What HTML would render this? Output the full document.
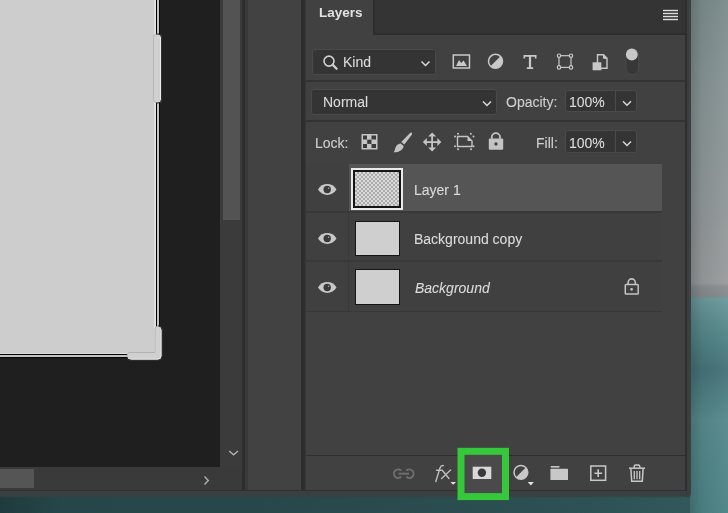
<!DOCTYPE html>
<html><head><meta charset="utf-8">
<style>
*{margin:0;padding:0;box-sizing:border-box}
html,body{width:728px;height:513px;overflow:hidden;background:#2b4749;font-family:"Liberation Sans",sans-serif}
.a{position:absolute}
#bgphoto{left:686px;top:0;width:42px;height:513px;background:linear-gradient(90deg,rgba(20,30,30,.3) 0px,rgba(20,30,30,.22) 6px,rgba(20,30,30,.08) 16px,rgba(255,255,255,.03) 42px),linear-gradient(180deg,#7c8c8d 0px,#879495 80px,#919899 200px,#9a9c9e 283px,#8a8e90 287px,#858a8c 296px,#6c9a9c 299px,#5c8d90 320px,#4f8084 345px,#457379 370px,#578a8d 420px,#4d8487 513px)}
#bottomstrip{left:0;top:491px;width:690px;height:22px;background:linear-gradient(180deg,#3a3f3f 0px,#3a3f3f 5px,rgba(58,63,63,0) 7px),linear-gradient(90deg,#1f3a3c 0px,#25474a 60px,#28494b 300px,#2c5053 560px,#32585b 690px)}
#work{left:0;top:0;width:220px;height:467px;background:#1f1f1f}
#canvas{left:0;top:0;width:160px;height:358px;background:#080808}
#canvasw2{left:0;top:0;width:159px;height:357px;background:#c4c4c4}
#canvasb{left:0;top:0;width:157px;height:355px;background:#000}
#canvasw{left:0;top:0;width:156px;height:354px;background:#e0e0e0}
#canvasf{left:0;top:0;width:154px;height:353px;background:#cdcdcd}
#vscroll{left:220px;top:0;width:22px;height:467px;background:#3b3b3b}
#vthumb{left:222.5px;top:0;width:17.5px;height:220px;background:#535353}
#hscroll{left:0;top:467px;width:243px;height:24px;background:#3a3a3a}
#hthumb{left:0;top:469px;width:34px;height:19px;background:#555555}
#sep1{left:242px;top:0;width:6px;height:491px;background:linear-gradient(90deg,#2d2d2d 0px,#2d2d2d 2.5px,#393939 2.5px)}
#mid{left:248px;top:0;width:53px;height:491px;background:#424242}
#sep2{left:301px;top:0;width:5px;height:491px;background:linear-gradient(90deg,#2e2e2e 0px,#2e2e2e 3.5px,#383838 3.5px)}
#panel{left:306px;top:0;width:380px;height:491px;background:#414141}
#panelEdge{left:686px;top:0;width:5px;height:497px;background:linear-gradient(90deg,#383b3b,#3e4242);border-bottom-right-radius:4px}
#hdr{left:372.5px;top:0;width:313px;height:35px;background:#343434;box-shadow:inset 1.5px -1.5px 1px #2d2d2d}
.box{background:#343434;border:1.5px solid #4a4a4a;border-radius:3px}
.t{position:absolute;color:#dcdcdc;font-size:14px;white-space:nowrap;line-height:1;will-change:transform;-webkit-text-stroke:0.08px #dcdcdc}
.row{position:absolute;left:306px;width:356px;background:#404040}
.eyec{position:absolute;left:306px;width:43px;background:#404040}
.sel{background:#555555}
.thumb{position:absolute;border:2px solid #151515;background:#cfcfcf}
</style></head><body>
<div class="a" id="bgphoto"></div>
<div class="a" id="bottomstrip"></div>
<div class="a" id="work"></div>
<div class="a" id="canvas"></div>
<div class="a" id="canvasw2"></div>
<div class="a" id="canvasb"></div>
<div class="a" id="canvasw"></div>
<div class="a" id="canvasf"></div>
<div class="a" id="vscroll"></div>
<div class="a" id="vthumb"></div>
<div class="a" id="hscroll"></div>
<div class="a" id="hthumb"></div>
<div class="a" id="sep1"></div>
<div class="a" id="mid"></div>
<div class="a" id="sep2"></div>
<div class="a" id="panel"></div>
<div class="a" id="panelEdge"></div>
<div class="a" id="hdr"></div>
<div class="a" style="left:685px;top:0;width:1.5px;height:491px;background:#2e2e2e"></div>
<div class="a" style="left:0;top:490px;width:686px;height:1px;background:#303030"></div>

<!-- header -->
<div class="t" style="left:319px;top:6px;font-size:13.5px;font-weight:bold;color:#e2e2e2;-webkit-text-stroke:0">Layers</div>

<!-- separators -->
<div class="a" style="left:306px;top:80px;width:380px;height:2px;background:#333"></div>
<div class="a" style="left:306px;top:120px;width:380px;height:2px;background:#333"></div>
<div class="a" style="left:306px;top:455px;width:380px;height:1px;background:#2f2f2f"></div>

<!-- filter row -->
<div class="a box" style="left:312px;top:49px;width:124px;height:26px"></div>
<div class="t" style="left:343px;top:55px">Kind</div>
<div class="a box" style="left:311px;top:89px;width:186px;height:26px"></div>
<div class="t" style="left:323px;top:95.3px">Normal</div>
<div class="t" style="left:506px;top:95.3px;color:#cfcfcf">Opacity:</div>
<div class="a box" style="left:565px;top:90px;width:72px;height:22px"></div>
<div class="a" style="left:615px;top:91px;width:1px;height:20px;background:#4a4a4a"></div>
<div class="t" style="left:569px;top:95.3px">100%</div>
<div class="t" style="left:315px;top:136px;color:#cfcfcf">Lock:</div>
<div class="t" style="left:536px;top:136px;color:#cfcfcf">Fill:</div>
<div class="a box" style="left:565px;top:130px;width:72px;height:23px"></div>
<div class="a" style="left:615px;top:131px;width:1px;height:21px;background:#4a4a4a"></div>
<div class="t" style="left:569px;top:135.6px">100%</div>

<!-- layer rows -->
<div class="a" style="left:306px;top:164px;width:356px;height:148px;background:#383838"></div>
<div class="row sel" style="top:164px;height:47px"></div>
<div class="eyec" style="top:164px;height:47px"></div>
<div class="row" style="top:213px;height:47px"></div>
<div class="row" style="top:262px;height:49px"></div>
<div class="a" style="left:348px;top:213px;width:1px;height:98px;background:#393939"></div>

<div class="a" style="left:351px;top:168px;width:52px;height:42px;border:2px solid #eaeaea"></div>
<div class="thumb" style="left:353px;top:170px;width:48px;height:38px;background-color:#dadada;background-image:linear-gradient(45deg,#acacac 25%,transparent 25%,transparent 75%,#acacac 75%),linear-gradient(45deg,#acacac 25%,transparent 25%,transparent 75%,#acacac 75%);background-size:4px 4px;background-position:0 0,2px 2px;border-width:2.5px"></div>
<div class="thumb" style="left:354.5px;top:221px;width:45.5px;height:35px;border-width:1.7px"></div>
<div class="thumb" style="left:354.5px;top:268.5px;width:45.5px;height:36px;border-width:1.7px"></div>
<div class="t" style="left:414px;top:183px">Layer 1</div>
<div class="t" style="left:414px;top:231.5px">Background copy</div>
<div class="t" style="left:415px;top:281px;font-style:italic">Background</div>

<svg class="a" style="left:0;top:0" width="728" height="513" viewBox="0 0 728 513">
  <!-- canvas handles -->
  <rect x="153.5" y="34" width="8" height="69" rx="3.5" fill="#d0d0d0" stroke="#a8a8a8" stroke-width="0.6"/>
  <path d="M156 34 h2 a3.5 3.5 0 0 1 3.5 3.5 v62 a3.5 3.5 0 0 1 -3.5 3.5 h-2" fill="none" stroke="#151515" stroke-width="0.9"/>
  <path d="M160.6 37.5 v62" fill="none" stroke="#f0f0f0" stroke-width="0.9"/>
  <path d="M158 326 h0.5 a3.5 3.5 0 0 1 3.5 3.5 v26.5 a4 4 0 0 1 -4 4 h-28 a3 3 0 0 1 -3 -3 v-1.5 a3 3 0 0 1 3 -3 h25 v-23.5 a3 3 0 0 1 3 -3 z" fill="#d0d0d0" stroke="#a0a0a0" stroke-width="0.6"/>
  <path d="M158 326 h0.5 a3.5 3.5 0 0 1 3.5 3.5 v26.5 a4 4 0 0 1 -4 4 h-28 a3 3 0 0 1 -3 -3" fill="none" stroke="#151515" stroke-width="0.9"/>
  <path d="M161 330 v26 a3.2 3.2 0 0 1 -3.2 3.2 h-27" fill="none" stroke="#ececec" stroke-width="0.9"/>
  <!-- scroll arrows -->
  <path d="M229.2 451 l4.4 3.8 l4.4 -3.8" fill="none" stroke="#b0b0b0" stroke-width="1.4"/>
  <path d="M204.5 476.6 l3.8 4 l-3.8 4" fill="none" stroke="#b0b0b0" stroke-width="1.4"/>
  <!-- hamburger -->
  <g stroke="#dedede" stroke-width="1.4">
    <line x1="663" y1="10.5" x2="678" y2="10.5"/><line x1="663" y1="13.5" x2="678" y2="13.5"/>
    <line x1="663" y1="16.5" x2="678" y2="16.5"/><line x1="663" y1="19.5" x2="678" y2="19.5"/>
  </g>
  <!-- search icon -->
  <circle cx="329" cy="61.1" r="5" fill="none" stroke="#cfcfcf" stroke-width="1.6"/>
  <line x1="332.8" y1="64.9" x2="336.6" y2="68.8" stroke="#cfcfcf" stroke-width="2.3" stroke-linecap="round"/>
  <!-- chevrons -->
  <g fill="none" stroke="#d8d8d8" stroke-width="1.5">
    <path d="M421.5 61.5 l4 4 l4 -4"/>
    <path d="M483 101.5 l4 4 l4 -4"/>
    <path d="M623 101.3 l4 4 l4 -4"/>
    <path d="M623 141.5 l4 4 l4 -4"/>
  </g>
  <!-- image icon -->
  <rect x="453.3" y="55" width="16.2" height="13" fill="none" stroke="#c8c8c8" stroke-width="1.5"/>
  <path d="M456 66 L459 60 L461.2 63 L463.5 60.5 L467 66 Z" fill="#c8c8c8"/>
  <!-- adjustment circle -->
  <circle cx="495.5" cy="61.3" r="7" fill="none" stroke="#c8c8c8" stroke-width="1.5"/>
  <path d="M500.5 56.3 A7 7 0 0 1 490.5 66.3 Z" fill="#c8c8c8"/>
  <!-- T -->
  <path d="M523.5 55 H536.5 V58.6 H534.9 V56.8 H531.1 V67.3 H533.2 V69 H526.8 V67.3 H528.9 V56.8 H525.1 V58.6 H523.5 Z" fill="#c8c8c8"/>
  <!-- shape icon -->
  <g fill="none" stroke="#c8c8c8" stroke-width="1.4">
    <rect x="559" y="55.7" width="12" height="11.7" stroke-width="1.2"/>
  </g>
  <g fill="#414141" stroke="#c8c8c8" stroke-width="1.2">
    <circle cx="559" cy="55.7" r="1.7"/><circle cx="571" cy="55.7" r="1.7"/>
    <circle cx="559" cy="67.4" r="1.7"/><circle cx="571" cy="67.4" r="1.7"/>
  </g>
  <!-- smart object icon -->
  <path d="M597.5 54.8 h6 l3.5 3.5 v10 h-9.5 z" fill="none" stroke="#c8c8c8" stroke-width="1.4"/>
  <path d="M603.5 54.8 v3.5 h3.5" fill="#c8c8c8" stroke="#c8c8c8" stroke-width="1"/>
  <rect x="592.6" y="62.3" width="8.7" height="8" fill="#c8c8c8"/>
  <!-- toggle -->
  <rect x="626" y="48.5" width="12.5" height="26" rx="6.25" fill="#373737" stroke="#4a4a4a" stroke-width="1"/>
  <circle cx="631.8" cy="54.5" r="5.9" fill="#c8c8c8"/>
  <!-- lock row icons -->
  <g>
    <rect x="361.5" y="134" width="16" height="15.5" fill="#c4c4c4"/>
    <rect x="363" y="135.5" width="4" height="4" fill="#3a3a3a"/>
    <rect x="371.5" y="135.5" width="4.5" height="4" fill="#3a3a3a"/>
    <rect x="367.2" y="139.7" width="4.3" height="4.2" fill="#3a3a3a"/>
    <rect x="363" y="144" width="4" height="4" fill="#3a3a3a"/>
    <rect x="371.5" y="144" width="4.5" height="4" fill="#3a3a3a"/>
  </g>
  <!-- brush -->
  <path d="M411.2 132.4 C412.3 132.6 412.2 134 411.6 135 L404.3 144.4 L401.3 142 L409.6 133.4 C410 132.9 410.6 132.4 411.2 132.4 Z" fill="#c4c4c4"/>
  <path d="M400.6 143.4 L403.6 145.9 C403.6 149.6 399 152.5 393.3 152.3 C395.5 150.8 394.5 148.3 396.5 145.7 C397.6 144.3 399.1 143.5 400.6 143.4 Z" fill="#c4c4c4"/>
  <!-- move -->
  <g fill="#c4c4c4">
    <rect x="431.2" y="135" width="1.8" height="14"/>
    <rect x="425" y="141.2" width="14" height="1.8"/>
    <path d="M432.1 132.6 l4 4 h-8 z"/>
    <path d="M432.1 151.4 l4 -4 h-8 z"/>
    <path d="M422.8 142.1 l4 -4 v8 z"/>
    <path d="M441.4 142.1 l-4 -4 v8 z"/>
  </g>
  <!-- artboard -->
  <path d="M457.5 136.5 h10 l4.5 4.5 v5.5 h-14.5 z" fill="none" stroke="#c4c4c4" stroke-width="1.4"/>
  <path d="M467.5 136.5 v4.5 h4.5 z" fill="#c4c4c4"/>
  <g fill="#c4c4c4">
    <circle cx="455" cy="136.5" r="1"/><circle cx="458" cy="133.8" r="1"/>
    <circle cx="470.8" cy="133.8" r="1"/><circle cx="473.5" cy="136.5" r="1"/>
    <circle cx="455" cy="146.3" r="1"/><circle cx="458" cy="149.3" r="1"/>
    <circle cx="471" cy="149.3" r="1"/><circle cx="473.5" cy="146.3" r="1"/>
  </g>
  <!-- lock -->
  <path d="M491.8 138.8 v-1.5 a4.1 4.1 0 0 1 8.2 0 v1.5" fill="none" stroke="#c4c4c4" stroke-width="1.8"/>
  <rect x="488.8" y="138.5" width="14.4" height="11.3" rx="1" fill="#c4c4c4"/>
  <circle cx="496" cy="143.9" r="1.6" fill="#3a3a3a"/>
  <!-- eyes -->
  <g id="eye">
    <path d="M318 189.5 C322 182.3 332.5 182.3 336.5 189.5 C332.5 196.7 322 196.7 318 189.5 Z" fill="#c8c8c8"/>
    <circle cx="327.2" cy="189.5" r="3.7" fill="#3a3a3a"/>
    <circle cx="328.6" cy="188.2" r="0.8" fill="#aaa"/>
  </g>
  <use href="#eye" y="49"/>
  <use href="#eye" y="98"/>
  <!-- lock in background row -->
  <path d="M628.1 284.5 v-2 a3.6 3.6 0 0 1 7.2 0 v2" fill="none" stroke="#c4c4c4" stroke-width="1.6"/>
  <rect x="625.3" y="284.4" width="12.9" height="9.6" rx="0.8" fill="none" stroke="#c4c4c4" stroke-width="1.5"/>
  <circle cx="631.6" cy="289.3" r="1.4" fill="#c4c4c4"/>
  <!-- bottom icons -->
  <!-- link -->
  <g fill="none" stroke="#6f6f6f" stroke-width="1.9">
    <path d="M401.2 470.6 A4.3 4.3 0 1 0 401.2 476.8"/>
    <path d="M406.3 470.6 A4.3 4.3 0 1 1 406.3 476.8"/>
    <line x1="398.5" y1="473.7" x2="409" y2="473.7"/>
  </g>
  <!-- fx -->
  <g fill="none" stroke="#bdbdbd" stroke-width="1.4" stroke-linecap="round"><path d="M435.8 481.5 L440 468 Q441 465.3 443.4 465.6"/><path d="M436.6 470.3 h4.6"/><path d="M442 470 L449 478.5 M450.6 470 L441.6 478.5"/></g>
  <path d="M450.4 482 h5.6 l-2.8 2.8 z" fill="#e0e0e0"/>
  <!-- green box -->
  <rect x="461" y="451.3" width="44.5" height="45.3" fill="#4a4a4a" stroke="#35c83a" stroke-width="7"/>
  <!-- mask icon -->
  <rect x="472.7" y="466.7" width="18.6" height="12.3" fill="#d8d8d8"/>
  <circle cx="481.9" cy="472.8" r="4.2" fill="#3a3a3a"/>
  <!-- adjustment -->
  <circle cx="520.9" cy="472.3" r="6.9" fill="none" stroke="#c8c8c8" stroke-width="1.5"/>
  <path d="M525.8 467.4 A6.9 6.9 0 0 1 516 477.2 Z" fill="#c8c8c8"/>
  <path d="M527.8 482 h6 l-3 3.6 z" fill="#e4e4e4"/>
  <!-- folder -->
  <rect x="550.8" y="466" width="8.6" height="1.6" fill="#c8c8c8"/>
  <rect x="550.4" y="468.8" width="17.6" height="11.2" rx="0.6" fill="#c8c8c8"/>
  <!-- new layer -->
  <rect x="590.8" y="466" width="14.8" height="14.3" fill="none" stroke="#c8c8c8" stroke-width="1.5"/>
  <path d="M598.2 469.3 v7.7 M594.4 473.2 h7.7" stroke="#c8c8c8" stroke-width="1.6"/>
  <!-- trash -->
  <g fill="none" stroke="#c8c8c8" stroke-width="1.5">
    <path d="M629 468.2 h16"/>
    <path d="M634.2 467.8 v-1.2 a1.6 1.6 0 0 1 1.6 -1.6 h2.4 a1.6 1.6 0 0 1 1.6 1.6 v1.2"/>
    <path d="M630.9 469 l0.8 12.2 h10.6 l0.8 -12.2"/>
    <path d="M634.3 471 v8.3 M637 471 v8.3 M639.7 471 v8.3" stroke-width="1.3"/>
  </g>
</svg>
</body></html>
